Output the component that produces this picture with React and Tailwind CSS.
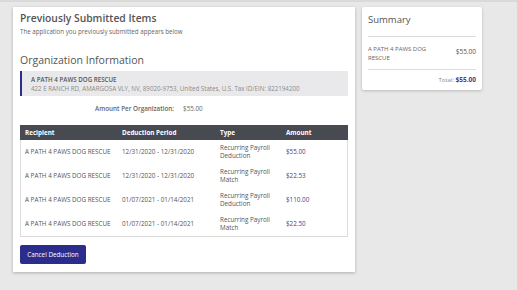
export default function App() {
  const rows = [
    { r: "A PATH 4 PAWS DOG RESCUE", p: "12/31/2020 - 12/31/2020", t: ["Recurring Payroll", "Deduction"], a: "$55.00" },
    { r: "A PATH 4 PAWS DOG RESCUE", p: "12/31/2020 - 12/31/2020", t: ["Recurring Payroll", "Match"], a: "$22.53" },
    { r: "A PATH 4 PAWS DOG RESCUE", p: "01/07/2021 - 01/14/2021", t: ["Recurring Payroll", "Deduction"], a: "$110.00" },
    { r: "A PATH 4 PAWS DOG RESCUE", p: "01/07/2021 - 01/14/2021", t: ["Recurring Payroll", "Match"], a: "$22.50" },
  ];
  return (
    <div
      className="min-h-[290px] w-[517px] bg-[#e8e8e8] border-t-2 border-[#d9d9d9] pt-[5px] pl-[13px] flex items-start gap-[7px] text-[#555]"
      style={{ fontFamily: '"Open Sans", sans-serif' }}
    >
      <div className="w-[342px] h-[265px] bg-white shadow-[0_1px_3px_rgba(0,0,0,0.25)] px-[7px] pt-[4px] flex flex-col">
        <h1 className="text-[10.3px] leading-[14px] font-semibold text-[#555]">Previously Submitted Items</h1>
        <p className="text-[6.2px] leading-[8px] mt-[3px] text-[#666]">The application you previously submitted appears below</p>
        <h2 className="text-[10.5px] leading-[14px] text-[#555] mt-[17px]">Organization Information</h2>
        <div className="mt-[4px] h-[25px] bg-[#e9e9eb] border-l-2 border-[#2b2d8a] pl-[9px] flex flex-col justify-center">
          <div className="text-[6.2px] leading-[9px] font-semibold text-[#555]">A PATH 4 PAWS DOG RESCUE</div>
          <div className="text-[6.2px] leading-[9px] text-[#8a8a8a]">422 E RANCH RD, AMARGOSA VLY, NV, 89020-9753, United States, U.S. Tax ID/EIN: 822194200</div>
        </div>
        <div className="mt-[8px] h-[9px] flex text-[6.3px] leading-[9px] pl-[75px] gap-[9px]">
          <span className="font-semibold text-[#666]">Amount Per Organization:</span>
          <span className="text-[#666]">$55.00</span>
        </div>
        <div className="mt-[12px] border border-[#dcdcdc] border-t-0">
          <div className="h-[15px] bg-[#474a51] grid grid-cols-[97px_98px_66px_1fr] pl-[5px] items-center text-[6.3px] font-bold text-white -mx-px">
            <span>Recipient</span>
            <span>Deduction Period</span>
            <span>Type</span>
            <span>Amount</span>
          </div>
          {rows.map((row, i) => (
            <div key={i} className="h-[24px] grid grid-cols-[97px_98px_66px_1fr] pl-[4px] items-center text-[6.3px] leading-[8px] text-[#555]">
              <span>{row.r}</span>
              <span>{row.p}</span>
              <span>
                {row.t[0]}
                <br />
                {row.t[1]}
              </span>
              <span className="text-[#3b3f98]">{row.a}</span>
            </div>
          ))}
        </div>
        <button className="mt-[8px] w-[66px] h-[19px] bg-[#2a2d8c] rounded-[2px] text-white text-[6.3px] leading-[19px] text-center">
          Cancel Deduction
        </button>
      </div>
      <div className="w-[120px] h-[83px] bg-white shadow-[0_1px_3px_rgba(0,0,0,0.2)] rounded-[2px] px-[6px] pt-[6px]">
        <div className="text-[9.5px] leading-[13px] text-[#555]">Summary</div>
        <div className="mt-[10px] border-t border-[#dcdcdc]"></div>
        <div className="flex justify-between items-start pt-[8px] pb-[6px]">
          <div className="text-[6px] leading-[9px] w-[65px] text-[#666]">A PATH 4 PAWS DOG RESCUE</div>
          <div className="text-[6.5px] leading-[9px] mt-[2px] text-[#555]">$55.00</div>
        </div>
        <div className="border-t border-[#dcdcdc]"></div>
        <div className="text-right text-[6px] leading-[9px] pt-[5px] text-[#888]">
          Total: <span className="font-bold text-[6.5px] text-[#3b3f98]">$55.00</span>
        </div>
      </div>
    </div>
  );
}
